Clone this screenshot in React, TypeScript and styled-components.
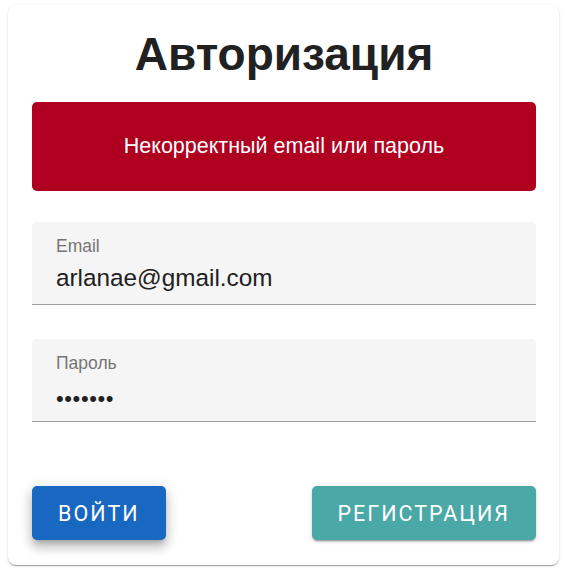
import { createGlobalStyle, styled } from "styled-components"

const Global = createGlobalStyle`
    html, body {
        margin: 0;
        background: #ffffff;
    }
    body {
        font-family: "Liberation Sans", Arial, sans-serif;
    }
`

const Page = styled.div`
    padding: 5px 8px 3px;
`

const Card = styled.form`
    box-sizing: border-box;
    height: 560px;
    background: #ffffff;
    border-radius: 8px;
    box-shadow: 0 2px 1px -1px rgba(0,0,0,0.2), 0 1px 1px 0 rgba(0,0,0,0.14), 0 1px 3px 0 rgba(0,0,0,0.12);
    padding: 24px 23px 25px 24px;
    display: flex;
    flex-direction: column;
`

const Title = styled.h1`
    margin: 0;
    text-align: center;
    font-size: 46px;
    line-height: 50px;
    font-weight: 700;
    color: #212121;
`

const Alert = styled.div`
    margin-top: 23px;
    height: 89px;
    border-radius: 5px;
    background: #b00020;
    color: #ffffff;
    display: flex;
    align-items: center;
    justify-content: center;
    font-size: 21.5px;
`

const Fields = styled.div`
    margin-top: 31px;
    display: flex;
    flex-direction: column;
    gap: 34px;
`

const Field = styled.label`
    box-sizing: border-box;
    height: 83px;
    background: #f5f5f5;
    border-radius: 5px 5px 0 0;
    border-bottom: 1px solid #9e9e9e;
    padding: 13px 24px 0;
    display: flex;
    flex-direction: column;
`

const Label = styled.span`
    font-size: 17.5px;
    line-height: 22px;
    color: #757575;
`

const Value = styled.input<{ $secret?: boolean }>`
    margin-top: ${p => (p.$secret ? "8px" : "4px")};
    border: 0;
    outline: none;
    background: transparent;
    padding: 0;
    font-family: "Liberation Sans", Arial, sans-serif;
    font-size: ${p => (p.$secret ? "22px" : "24.3px")};
    line-height: 34px;
    color: #212121;
    letter-spacing: ${p => (p.$secret ? "0.6px" : "0")};
`

const Actions = styled.div`
    margin-top: auto;
    display: flex;
    justify-content: space-between;
    align-items: center;
`

const Button = styled.button<{ $color: string }>`
    height: 54px;
    padding: 0 26px;
    border: 0;
    border-radius: 5px;
    background: ${p => p.$color};
    color: #ffffff;
    font-family: Roboto, "Liberation Sans", sans-serif;
    font-size: 21.5px;
    font-weight: 400;
    letter-spacing: 2px;
    text-transform: uppercase;
    cursor: pointer;
    box-shadow: 0 3px 1px -2px rgba(0,0,0,0.2), 0 2px 2px 0 rgba(0,0,0,0.14), 0 1px 5px 0 rgba(0,0,0,0.12);
`

const LoginButton = styled(Button)`
    box-shadow: 0 5px 5px -3px rgba(0,0,0,0.2), 0 8px 10px 1px rgba(0,0,0,0.14), 0 3px 14px 2px rgba(0,0,0,0.12);
`

export default function App() {
    return (
        <>
            <Global />
            <Page>
                <Card onSubmit={e => e.preventDefault()}>
                    <Title>Авторизация</Title>
                    <Alert>Некорректный email или пароль</Alert>
                    <Fields>
                        <Field>
                            <Label>Email</Label>
                            <Value type="email" defaultValue="arlanae@gmail.com" />
                        </Field>
                        <Field>
                            <Label>Пароль</Label>
                            <Value $secret type="password" defaultValue="1234567" />
                        </Field>
                    </Fields>
                    <Actions>
                        <LoginButton type="submit" $color="#1867c0">Войти</LoginButton>
                        <Button type="button" $color="#4aa8a6">Регистрация</Button>
                    </Actions>
                </Card>
            </Page>
        </>
    )
}
